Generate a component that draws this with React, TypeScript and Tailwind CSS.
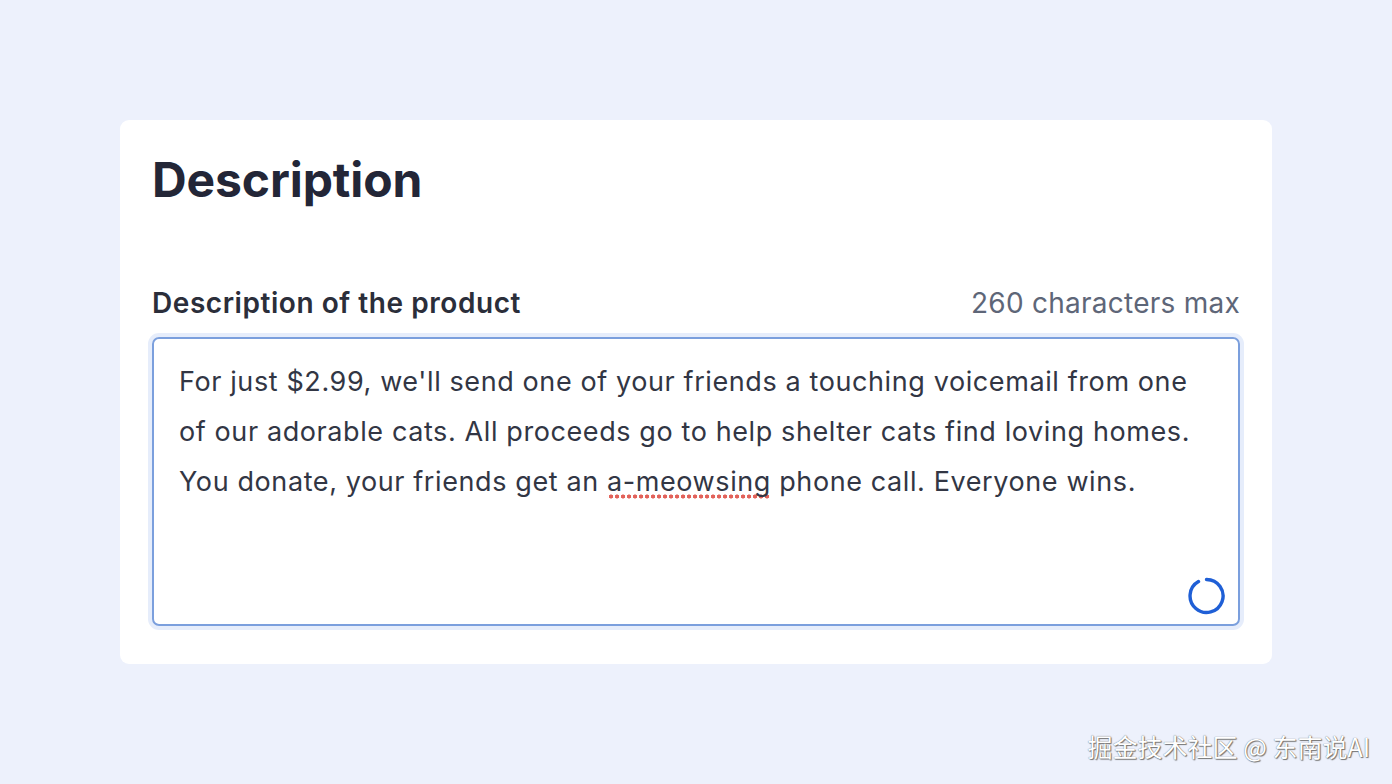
import React from 'react';

function Spinner() {
  return (
    <svg width="40" height="40" viewBox="0 0 40 40" className="block">
      <path
        d="M20.5 3.5 A16.5 16.5 0 1 1 12.5 5.6"
        fill="none"
        stroke="#1f5fd6"
        strokeWidth="3.4"
        strokeLinecap="round"
      />
    </svg>
  );
}

export default function App() {
  return (
    <div
      className="relative w-[1392px] h-[784px] bg-[#edf1fc] overflow-hidden pt-[120px] px-[120px]"
      style={{ fontFamily: 'Inter, "Noto Sans", sans-serif' }}
    >
      <div className="h-[544px] bg-white rounded-[9px] px-[32px] pt-[29px] flex flex-col">
        <h1 className="text-[48px] leading-[62px] font-bold text-[#232637] tracking-[-0.1px]">
          Description
        </h1>

        <div className="mt-[76px] flex items-center justify-between h-[32px]">
          <span className="text-[28px] font-semibold text-[#2b2e3a] tracking-[0.55px]">
            Description of the product
          </span>
          <span className="text-[28px] text-[#5e6678] tracking-[0.25px]">260 characters max</span>
        </div>

        <div className="relative mt-[18px] h-[289px] rounded-[7px] border-2 border-[#7b9fdd] shadow-[0_0_0_4px_#e6edfb] pl-[25px] pr-[30px] pt-[18px]">
          <p className="text-[27px] leading-[50px] text-[#323644] tracking-[0.6px]">
            For just $2.99, we'll send one of your friends a touching voicemail from one of our
            adorable cats. All proceeds go to help shelter cats find loving homes. You donate, your
            friends get an{' '}
            <span className="pb-[1px] bg-[radial-gradient(circle,#e2625a_1.8px,transparent_2.3px)] bg-[length:6px_5px] bg-repeat-x bg-bottom">
              a-meowsing
            </span>{' '}
            phone call. Everyone wins.
          </p>
          <div className="absolute right-[12px] bottom-[8px]">
            <Spinner />
          </div>
        </div>
      </div>

      <div
        className="absolute right-[22px] top-[728px] text-[25px] text-white"
        style={{
          fontFamily: '"Noto Sans CJK SC", "Noto Sans", sans-serif',
          textShadow: '0 0 1px #555, 1px 1px 1px #777',
        }}
      >
        掘金技术社区 @ 东南说AI
      </div>
    </div>
  );
}
